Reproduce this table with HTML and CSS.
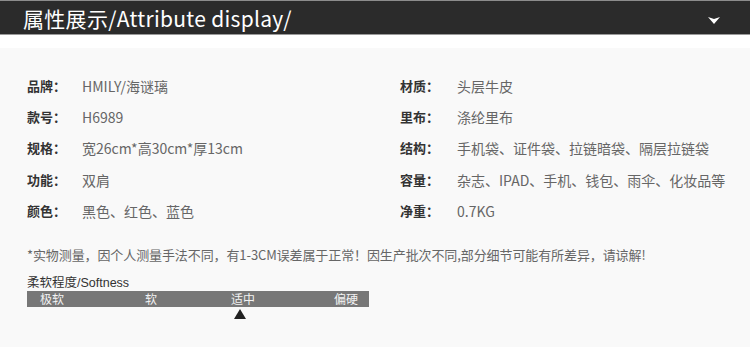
FILE: index.html
```html
<!DOCTYPE html>
<html lang="zh-CN">
<head>
<meta charset="utf-8">
<title>属性展示</title>
<link rel="stylesheet" href="styles.css">
</head>
<body>
<header class="bar">
  <h1 class="bar-title">属性展示/Attribute display/</h1>
  <svg class="bar-arrow" width="12" height="7" viewBox="0 0 12 7"><polygon points="0,0 6,2 12,0 6,7" fill="#fff"/></svg>
</header>
<section class="panel">
  <div class="attrs">
    <div class="attr"><span class="k">品牌：</span><span class="v">HMILY/海谜璃</span></div>
    <div class="attr"><span class="k">材质：</span><span class="v">头层牛皮</span></div>
    <div class="attr"><span class="k">款号：</span><span class="v">H6989</span></div>
    <div class="attr"><span class="k">里布：</span><span class="v">涤纶里布</span></div>
    <div class="attr"><span class="k">规格：</span><span class="v">宽26cm*高30cm*厚13cm</span></div>
    <div class="attr"><span class="k">结构：</span><span class="v">手机袋、证件袋、拉链暗袋、隔层拉链袋</span></div>
    <div class="attr"><span class="k">功能：</span><span class="v">双肩</span></div>
    <div class="attr"><span class="k">容量：</span><span class="v">杂志、IPAD、手机、钱包、雨伞、化妆品等</span></div>
    <div class="attr"><span class="k">颜色：</span><span class="v">黑色、红色、蓝色</span></div>
    <div class="attr"><span class="k">净重：</span><span class="v">0.7KG</span></div>
  </div>
  <p class="note">*实物测量，因个人测量手法不同，有1-3CM误差属于正常！因生产批次不同,部分细节可能有所差异，请谅解!</p>
  <div class="soft">
    <div class="soft-title">柔软程度/Softness</div>
    <div class="scale">
      <span class="s1">极软</span><span class="s2">软</span><span class="s3">适中</span><span class="s4">偏硬</span>
    </div>
    <div class="pointer"></div>
  </div>
</section>
</body>
</html>
```
FILE: styles.css
```css
html, body {
  margin: 0;
  padding: 0;
  background: #fff;
}
body {
  width: 750px;
  height: 363px;
  overflow: hidden;
  font-family: "Noto Sans CJK SC", "Noto Sans", sans-serif;
}
.bar {
  height: 33px;
  background: #2b2b2b;
  border-top: 1px solid #8c8c8c;
  border-bottom: 1px solid #9a9a9a;
  display: flex;
  align-items: center;
  justify-content: space-between;
  padding: 0 30px 0 23px;
}
.bar-title {
  margin: 0;
  padding-top: 1px;
  font-size: 21px;
  font-weight: normal;
  color: #fff;
  line-height: 26px;
  letter-spacing: 0.3px;
}
.bar-arrow {
  display: block;
  margin-top: 6px;
}
.panel {
  margin-top: 13px;
  background: #f9f9f9;
  height: 299px;
  padding: 0 0 0 27px;
  box-sizing: border-box;
  padding-top: 22px;
}
.attrs {
  display: grid;
  grid-template-columns: 373px 1fr;
  grid-auto-rows: 31.4px;
}
.attr {
  display: flex;
  align-items: center;
  line-height: 20px;
}
.k {
  width: 55px;
  flex: none;
  font-size: 13px;
  color: #333;
  font-weight: bold;
}
.attr:nth-child(even) .k {
  width: 57px;
}
.v {
  font-size: 14px;
  color: #666;
}
.note {
  margin: 18px 0 0;
  font-size: 13px;
  line-height: 20px;
  color: #666;
  letter-spacing: -0.1px;
}
.soft {
  margin-top: 11px;
}
.soft-title {
  font-family: "Liberation Sans", "Noto Sans CJK SC", sans-serif;
  font-size: 12.5px;
  line-height: 15px;
  color: #333;
}
.scale {
  margin-top: 0;
  width: 342px;
  height: 16px;
  background: #777;
  display: flex;
  align-items: center;
  font-size: 12px;
  line-height: 16px;
  color: #f2f2f2;
  box-sizing: border-box;
  padding-left: 13px;
}
.s2 { margin-left: 81px; }
.s3 { margin-left: 74px; }
.s4 { margin-left: 79px; }
.pointer {
  margin: 2px 0 0 207px;
  width: 0;
  height: 0;
  border-left: 6px solid transparent;
  border-right: 6px solid transparent;
  border-bottom: 10px solid #222;
}
```
